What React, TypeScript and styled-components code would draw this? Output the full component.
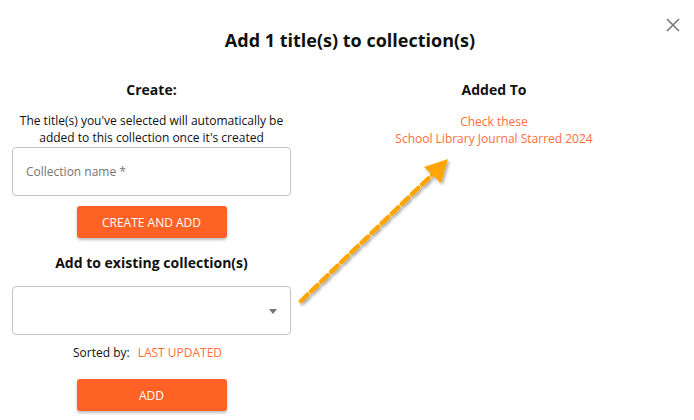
import React from "react";
import styled, { createGlobalStyle } from "styled-components";

const Global = createGlobalStyle`
  html, body { margin: 0; padding: 0; background: #fff; }
  body { font-family: "Open Sans", "Noto Sans", sans-serif; color: #111; }
  * { box-sizing: border-box; }
`;

const Modal = styled.div`
  position: relative;
  width: 694px;
  height: 420px;
  overflow: hidden;
  background: #fff;
`;

const Title = styled.h1`
  margin: 0;
  padding: 28px 0 0 6px;
  font-size: 18px;
  line-height: 24px;
  font-weight: 700;
  text-align: center;
  color: #111;
`;

const Close = styled.button`
  position: absolute;
  top: 17px;
  right: 13px;
  width: 16px;
  height: 16px;
  padding: 0;
  border: 0;
  background: none;
  cursor: pointer;
`;

const Columns = styled.div`
  display: grid;
  grid-template-columns: 279px 382px;
  column-gap: 12px;
  padding: 0 12px;
  margin-top: 28px;
`;

const Column = styled.div`
  display: flex;
  flex-direction: column;
  align-items: center;
`;

const Heading = styled.h2<{ $mt?: number }>`
  margin: ${(p) => p.$mt ?? 0}px 0 0;
  font-size: 14px;
  line-height: 20px;
  font-weight: 700;
  text-align: center;
`;

const Note = styled.p`
  margin: 12px 0 0;
  font-size: 12px;
  line-height: 17px;
  text-align: center;
  color: #111;
`;

const Field = styled.div<{ $mt: number }>`
  width: 100%;
  height: 49px;
  margin-top: ${(p) => p.$mt}px;
  border: 1px solid #c4c4c4;
  border-radius: 4px;
  display: flex;
  align-items: center;
  padding: 0 13px;
  position: relative;
`;

const Placeholder = styled.span`
  font-size: 12px;
  color: #757575;
`;

const Caret = styled.span`
  position: absolute;
  right: 13px;
  top: 22px;
  width: 0;
  height: 0;
  border-left: 4px solid transparent;
  border-right: 4px solid transparent;
  border-top: 5px solid #757575;
`;

const Button = styled.button<{ $mt: number }>`
  width: 150px;
  height: 32px;
  margin-top: ${(p) => p.$mt}px;
  border: 0;
  border-radius: 3px;
  background: #ff6224;
  color: #fff;
  font-family: inherit;
  font-size: 12px;
  box-shadow: 0 2px 3px rgba(0, 0, 0, 0.25);
`;

const Sorted = styled.div`
  margin-top: 9px;
  padding-right: 8px;
  font-size: 12px;
  line-height: 17px;
  display: flex;
  gap: 8px;
`;

const Link = styled.span`
  color: #ff6d3a;
  font-size: 12px;
  line-height: 17px;
`;

const AddedList = styled.div`
  margin-top: 13px;
  display: flex;
  flex-direction: column;
  align-items: center;
`;

const Arrow = styled.svg`
  position: absolute;
  left: 290px;
  top: 150px;
  overflow: visible;
`;

export default function App() {
  return (
    <>
      <Global />
      <Modal>
        <Title>Add 1 title(s) to collection(s)</Title>
        <Close aria-label="close">
          <svg width="16" height="16" viewBox="0 0 16 16">
            <path d="M2 2 L14 14 M14 2 L2 14" stroke="#777" strokeWidth="1.6" />
          </svg>
        </Close>
        <Columns>
          <Column>
            <Heading>Create:</Heading>
            <Note>
              The title(s) you've selected will automatically be
              <br />
              added to this collection once it's created
            </Note>
            <Field $mt={1}>
              <Placeholder>Collection name *</Placeholder>
            </Field>
            <Button $mt={10}>CREATE AND ADD</Button>
            <Heading $mt={15}>Add to existing collection(s)</Heading>
            <Field $mt={13}>
              <Caret />
            </Field>
            <Sorted>
              <span>Sorted by:</span>
              <Link>LAST UPDATED</Link>
            </Sorted>
            <Button $mt={18}>ADD</Button>
          </Column>
          <Column>
            <Heading>Added To</Heading>
            <AddedList>
              <Link>Check these</Link>
              <Link>School Library Journal Starred 2024</Link>
            </AddedList>
          </Column>
        </Columns>
        <Arrow width="180" height="190">
          <defs>
            <filter id="sh" x="-20%" y="-20%" width="140%" height="140%">
              <feDropShadow dx="1.5" dy="2" stdDeviation="1.5" floodColor="#000" floodOpacity="0.35" />
            </filter>
          </defs>
          <g filter="url(#sh)">
            <line x1="11" y1="151" x2="143" y2="24" stroke="#ffa500" strokeWidth="4.5" strokeDasharray="9 5" strokeLinecap="round" />
            <polygon points="158,9 151,33 134,17" fill="#ffa500" />
          </g>
        </Arrow>
      </Modal>
    </>
  );
}
